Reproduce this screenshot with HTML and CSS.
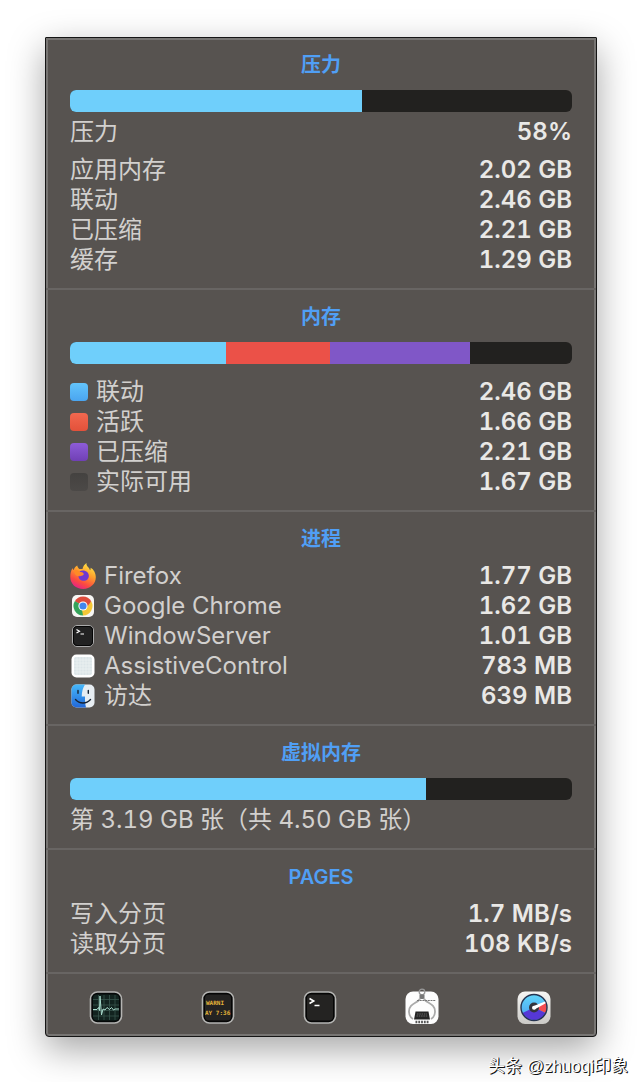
FILE: index.html
```
<!DOCTYPE html>
<html lang="zh-CN">
<head>
<meta charset="utf-8">
<meta name="viewport" content="width=device-width, initial-scale=1">
<title>内存</title>
<link rel="stylesheet" href="styles.css">
</head>
<body>
<main class="panel">
  <section class="section">
    <h2 class="title">压力</h2>
    <div class="bar"><span class="seg blue" style="width:58.2%"></span></div>
    <dl class="rows after-bar">
      <div class="row lead"><dt>压力</dt><dd>58%</dd></div>
      <div class="row"><dt>应用内存</dt><dd>2.02 GB</dd></div>
      <div class="row"><dt>联动</dt><dd>2.46 GB</dd></div>
      <div class="row"><dt>已压缩</dt><dd>2.21 GB</dd></div>
      <div class="row"><dt>缓存</dt><dd>1.29 GB</dd></div>
    </dl>
  </section>

  <section class="section">
    <h2 class="title">内存</h2>
    <div class="bar"><span class="seg blue" style="width:31.1%"></span><span class="seg red" style="width:20.7%"></span><span class="seg purple" style="width:27.9%"></span></div>
    <dl class="rows legend">
      <div class="row"><dt><i class="swatch sw-blue"></i>联动</dt><dd>2.46 GB</dd></div>
      <div class="row"><dt><i class="swatch sw-red"></i>活跃</dt><dd>1.66 GB</dd></div>
      <div class="row"><dt><i class="swatch sw-purple"></i>已压缩</dt><dd>2.21 GB</dd></div>
      <div class="row"><dt><i class="swatch sw-dark"></i>实际可用</dt><dd>1.67 GB</dd></div>
    </dl>
  </section>

  <section class="section">
    <h2 class="title">进程</h2>
    <dl class="rows plain">
      <div class="row"><dt>
        <svg class="app" viewBox="0 0 26 26" aria-hidden="true">
          <defs>
            <linearGradient id="fx" x1="0.8" y1="0" x2="0.3" y2="1"><stop offset="0" stop-color="#fff04a"/><stop offset=".4" stop-color="#ffa02c"/><stop offset=".75" stop-color="#fb4a40"/><stop offset="1" stop-color="#e2208a"/></linearGradient>
          </defs>
          <path fill="url(#fx)" d="M16.500 0c-.3 2.200.6 3.200 2 4.600.9.900 1.400 1.900 1.500 2.800.6-.8.700-1.600.6-2.600C23.800 6.400 25.800 10.300 25.800 14.300 25.800 21 20 26 13.200 26 6 26 .3 21 .3 14c0-3.500.6-6.500 2.300-9 .1 1.200.6 1.600 1.100 2C4.300 5.200 5.600 3.400 7.300 2.600c0 1.300.9 2.500 2 3.300L12.500 6c.4-2.600 2-4.600 4-6z"/>
          <path fill="#6f38d0" d="M9.500 8.500c2-1.500 5-1.500 7.300.3 2.500 2 2.700 5.500.8 7.400-2 2-5.600 2-7.600.2-1-1-1.600-2.200-1.400-3.500 1.300.6 3.500.2 4.600-.8 1-.9.600-1.900-.7-2.100-1.300-.3-2.200-.3-3-1.500z"/>
          <path fill="#ff8a26" d="M4 7.500c1.500-.9 3.300-.7 4.700.5 1 1 2.600 1.300 4.300 1.500l-1 1.600c-1.500 0-2.500.6-2.800 1.700C6.500 14 4.300 11 4 7.500z"/>
        </svg>Firefox</dt><dd>1.77 GB</dd></div>
      <div class="row"><dt>
        <svg class="app" viewBox="0 0 26 26" aria-hidden="true">
          <rect x="2" y="2" width="22" height="22" rx="5" fill="#f7f6f4"/>
          <path fill="#dd4b3c" d="M13 13 4.800 8.300A9.400 9.400 0 0 1 21.200 8.300z"/>
          <path fill="#f5c736" d="M13 13 21.200 8.300A9.400 9.400 0 0 1 13 22.400z"/>
          <path fill="#35a35a" d="M13 13v9.400A9.400 9.400 0 0 1 4.800 8.300z"/>
          <path fill="#dd4b3c" d="M13 8.300h8.200L17 14z"/><path fill="#f5c736" d="M17.300 14 13 22.400 12 17z"/><path fill="#35a35a" d="M9 14.500 4.800 8.300 9.500 11z"/>
          <circle cx="13" cy="13" r="4.600" fill="#fff"/><circle cx="13" cy="13" r="3.600" fill="#4286ed"/>
        </svg>Google Chrome</dt><dd>1.62 GB</dd></div>
      <div class="row"><dt>
        <svg class="app" viewBox="0 0 26 26" aria-hidden="true">
          <rect x="2.500" y="2.500" width="21" height="21" rx="4.500" fill="#222" stroke="#aaa"/>
          <rect x="3.500" y="3.500" width="19" height="19" rx="3.500" fill="none" stroke="#050505"/>
          <path d="m6.500 6.500 3 1.800-3 1.800M10.500 11h3.500" fill="none" stroke="#fff" stroke-width="1.200"/>
        </svg>WindowServer</dt><dd>1.01 GB</dd></div>
      <div class="row"><dt>
        <svg class="app" viewBox="0 0 26 26" aria-hidden="true">
          <rect x="1.500" y="1.500" width="23" height="23" rx="5" fill="#fff"/>
          <rect x="4" y="4" width="18" height="18" rx="2" fill="#dce5e8"/>
          <path d="M4 7h18M4 10h18M4 13h18M4 16h18M4 19h18M7 4v18M10 4v18M13 4v18M16 4v18M19 4v18" stroke="#eef3f4" stroke-width=".7"/>
        </svg>AssistiveControl</dt><dd>783 MB</dd></div>
      <div class="row"><dt>
        <svg class="app" viewBox="0 0 26 26" aria-hidden="true">
          <defs><linearGradient id="fd" x2="0" y2="1"><stop offset="0" stop-color="#46b8fa"/><stop offset="1" stop-color="#2268d8"/></linearGradient></defs>
          <rect x="1.500" y="1.500" width="23" height="23" rx="5" fill="#e7edf2"/>
          <path fill="url(#fd)" d="M6.500 1.500H15c-2.200 3.500-3.200 7.300-3.300 12H15c-.1 4 .1 7.500 1 11H6.500a5 5 0 0 1-5-5v-13a5 5 0 0 1 5-5z"/>
          <path d="M8 7.500v2.800M18.300 7.500v2.800M5.500 16.500c4 4.600 11 4.600 15 0" fill="none" stroke="#162333" stroke-width="1.400" stroke-linecap="round"/>
        </svg>访达</dt><dd>639 MB</dd></div>
    </dl>
  </section>

  <section class="section">
    <h2 class="title">虚拟内存</h2>
    <div class="bar"><span class="seg blue" style="width:70.9%"></span></div>
    <p class="note">第 3.19 GB 张（共 4.50 GB 张）</p>
  </section>

  <section class="section">
    <h2 class="title">PAGES</h2>
    <dl class="rows plain">
      <div class="row"><dt>写入分页</dt><dd>1.7 MB/s</dd></div>
      <div class="row"><dt>读取分页</dt><dd>108 KB/s</dd></div>
    </dl>
  </section>

  <nav class="tools">
    <button class="tool" type="button" aria-label="活动监视器">
      <svg viewBox="0 0 34 34">
        <rect x="1.500" y="2" width="31" height="31" rx="7" fill="#050808" stroke="#b4b4b2" stroke-width="1.600"/>
        <rect x="4" y="4.500" width="26" height="26" rx="4" fill="#12231f"/>
        <path d="M4 9.500h26M4 15h26M4 20.500h26M4 26h26M9.500 5v25M15 5v25M20.500 5v25M26 5v25" stroke="#38544d" stroke-width=".8"/>
        <path d="M4 19.500h4l1.500-2 1 3L11 6l1.500 19 1.500-6 2 1 2-2.500 2.500 2 2-2 2 2.500 1.500-1h4" fill="none" stroke="#a9dccd" stroke-width="1"/>
      </svg>
    </button>
    <span class="tool-group">
      <button class="tool" type="button" aria-label="控制台">
        <svg viewBox="0 0 34 34">
          <rect x="1.500" y="2" width="31" height="31" rx="7" fill="#050505" stroke="#b4b4b2" stroke-width="1.600"/>
          <rect x="4" y="4.500" width="26" height="26" rx="4" fill="#242322"/>
          <text class="console-text" x="5" y="15">WARNI</text>
          <text class="console-text" x="4" y="25">AY 7:36</text>
        </svg>
      </button>
      <button class="tool" type="button" aria-label="终端">
        <svg viewBox="0 0 34 34">
          <rect x="1.500" y="2" width="31" height="31" rx="7" fill="#050505" stroke="#b4b4b2" stroke-width="1.600"/>
          <rect x="4" y="4.500" width="26" height="26" rx="4" fill="#242322"/>
          <path d="m6.500 8.500 4.200 2.500-4.200 2.500M11.500 15.500h5" fill="none" stroke="#fff" stroke-width="1.600"/>
        </svg>
      </button>
      <button class="tool" type="button" aria-label="系统信息">
        <svg viewBox="0 0 34 34">
          <rect x=".5" y="1.500" width="33" height="32.500" rx="7.500" fill="#fdfdfd"/>
          <circle cx="17" cy="2" r="2.800" fill="none" stroke="#999" stroke-width="1.300"/>
          <rect x="14.500" y="4.500" width="5" height="4.500" rx="1" fill="#777"/>
          <path d="M15 8.500C14 13 3.500 13 4 22c.1 3.500 1.500 5.500 4 7M19 8.500c1 4.500 11.500 4.500 11 13.500-.1 3.500-1.500 5.500-4 7" fill="none" stroke="#aaa" stroke-width="1.800"/>
          <path d="M12 10.500h19" stroke="#777" stroke-dasharray="2 .7"/>
          <path d="M10.500 21.500h13l1.500 8H9z" fill="#242424"/>
          <path d="M12 24h10M11.500 26h11" stroke="#777" stroke-width=".8" stroke-dasharray="1.500 .8"/>
          <path d="M10.500 32h13.500" stroke="#555" stroke-width="2.400" stroke-dasharray="1.800 1"/>
        </svg>
      </button>
    </span>
    <button class="tool" type="button" aria-label="iStat Menus">
      <svg viewBox="0 0 34 34">
        <defs>
          <linearGradient id="tile" x2="0" y2="1"><stop offset="0" stop-color="#f6f6f4"/><stop offset="1" stop-color="#cbcac6"/></linearGradient>
          <linearGradient id="dial" x2="0" y2="1"><stop offset="0" stop-color="#62d6fa"/><stop offset="1" stop-color="#489cee"/></linearGradient>
        </defs>
        <rect x=".5" y="1.500" width="33" height="32.500" rx="7.500" fill="url(#tile)"/>
        <circle cx="17" cy="17.500" r="13" fill="url(#dial)"/>
        <path d="M17 17.500 28.500 12a13 13 0 0 1 0 11z" fill="#f34d52"/>
        <path d="M17 17.500 28.500 23A13 13 0 0 1 5.500 23z" fill="#5638d6"/>
        <circle cx="17" cy="17.500" r="13" fill="none" stroke="#263451" stroke-width="1.400"/>
        <circle cx="17" cy="17.500" r="5" fill="#34343c"/>
        <path d="m16 16.300 12-4.800.7 1.700-11.200 6.300z" fill="#fff"/><circle cx="17" cy="17.700" r="2" fill="#fff"/>
      </svg>
    </button>
  </nav>
</main>
<footer class="credit">头条 @zhuoqi印象</footer>
</body>
</html>
```
FILE: styles.css
```
* { box-sizing: border-box; }

body {
  margin: 0;
  background: #fff;
  font-family: Inter, "Noto Sans CJK SC", sans-serif;
  font-size: 24px;
  line-height: 30px;
  color: #d2d0ce;
}

.panel {
  margin: 37px 45px 0;
  border: 1px solid #151515;
  border-radius: 1px 1px 4px 4px;
  background: #575350;
  box-shadow: inset 0 0 0 2px #777573, 0 12px 36px rgba(0, 0, 0, .36);
}

.section {
  padding: 12px 24px 13px;
  border-bottom: 2px solid #686563;
}

.title {
  margin: 0 0 10px;
  font-size: 20px;
  font-weight: 600;
  line-height: 30px;
  text-align: center;
  color: #509ff5;
}

.bar {
  display: flex;
  height: 22px;
  border-radius: 6px;
  overflow: hidden;
  background: #22211f;
}

.seg { height: 100%; }
.blue { background: #6fcffb; }
.red { background: #eb5148; }
.purple { background: #8057c7; }

.rows { margin: 0; }
.after-bar { margin-top: 5px; }
.legend { margin-top: 13px; }
.plain { margin-top: -3px; }

.row {
  display: flex;
  justify-content: space-between;
  height: 30px;
}

.lead { margin-bottom: 8px; }

.row dt {
  display: flex;
  align-items: center;
}

.row dd {
  margin: 0;
  font-weight: 600;
  font-variant-numeric: tabular-nums;
  color: #e9e8e6;
}

.swatch {
  width: 18px;
  height: 18px;
  margin-right: 8px;
  border-radius: 4px;
}

.sw-blue { background: linear-gradient(#63c4fb, #4aa5f0); }
.sw-red { background: linear-gradient(#f2684f, #e3513a); }
.sw-purple { background: linear-gradient(#8d5cd8, #7040b5); }
.sw-dark { background: linear-gradient(#444240, #4c4947); }

.app {
  width: 26px;
  height: 26px;
  margin-right: 8px;
}

.note {
  margin: 5px 0 0;
  font-variant-numeric: tabular-nums;
}

.tools {
  display: flex;
  justify-content: space-between;
  padding: 16px 45px 12px 43px;
}

.tool-group {
  display: flex;
  gap: 68px;
}

.tool {
  width: 34px;
  height: 34px;
  padding: 0;
  border: 0;
  background: none;
}

.tool svg {
  display: block;
  width: 100%;
  height: 100%;
  overflow: visible;
}

.console-text {
  font: 700 6px "DejaVu Sans Mono", monospace;
  fill: #e3b43a;
}

.credit {
  padding: 15px 14px 0 0;
  font-family: "Liberation Sans", "Noto Sans CJK SC", sans-serif;
  font-size: 17px;
  text-align: right;
  color: #fff;
  text-shadow: 1px 1px 0 #111, 1px 0 0 #444;
}
```
